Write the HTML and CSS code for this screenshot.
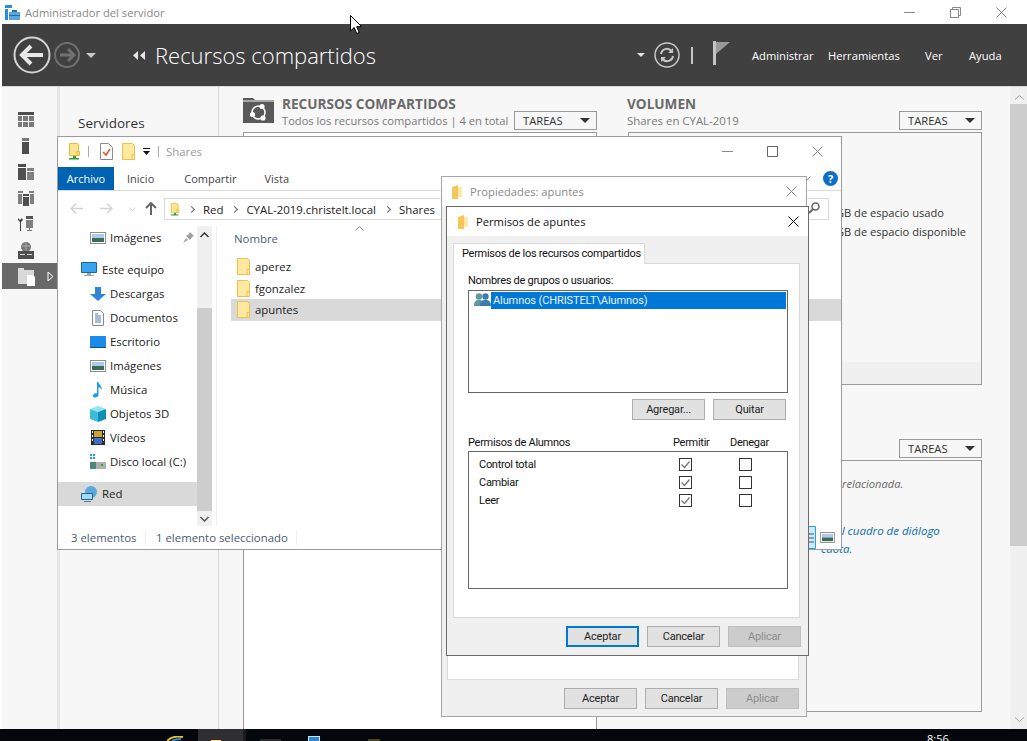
FILE: index.html
```html
<!DOCTYPE html>
<html lang="es">
<head>
    <meta charset="UTF-8">
    <title>Administrador del servidor</title>
    <link rel="stylesheet" href="styles.css">
</head>
<body>
    <svg class="defs" width="0" height="0">
        <symbol id="folder" viewBox="0 0 13 17">
            <path d="M.5.5h10l2 2v14H.5z" fill="#ffe9a0" stroke="#eebf4e"/>
            <path d="M10 11.5h2.5v5H10z" fill="#ffe9a0" stroke="#eebf4e"/>
        </symbol>
        <symbol id="share" viewBox="0 0 13 17">
            <path d="M1.5.5h8l1 1v11h-9z" fill="#ffe58f" stroke="#e8b93c"/>
            <path d="M9 8.5h2.5v4H9z" fill="#ffe58f" stroke="#e8b93c"/>
            <path d="M5 13h3v2H5zM1 15h10v1.500H1z" fill="#2f9e2f"/>
        </symbol>
        <symbol id="smallfolder" viewBox="0 0 10 14">
            <path d="M0 2l6-2v14H0z" fill="#f3c75c"/>
            <path d="M6 2h4v10H6z" fill="#ffe9a6"/>
        </symbol>
        <symbol id="pictures" viewBox="0 0 16 12">
            <rect x=".5" y=".5" width="15" height="11" fill="#fff" stroke="#8d8d8d"/>
            <rect x="2" y="2" width="12" height="4" fill="#a9cde8"/>
            <rect x="2" y="6" width="12" height="4" fill="#3f6a58"/>
        </symbol>
        <symbol id="x" viewBox="0 0 11 11">
            <path d="M.5.5l10 10M10.500.5l-10 10" fill="none" stroke="currentColor"/>
        </symbol>
        <symbol id="tri" viewBox="0 0 10 5">
            <path d="M0 0h10L5 5z" fill="currentColor"/>
        </symbol>
        <symbol id="tick" viewBox="0 0 11 11">
            <path d="M1.500 5.500l3 3 5-6" fill="none" stroke="#777" stroke-width="1.300"/>
        </symbol>
    </svg>

    <div class="manager">
        <div class="sm-title">
            <svg class="sm-logo" width="15" height="15" viewBox="0 0 15 15">
                <path d="M0 0h7v3H0zM0 4h3v11H0z" fill="#2a8fd8"/>
                <path d="M4 7h11v8H4z" fill="#5aa6dc"/>
                <path d="M7 5h5v2H7zM4 10h11v1H4z" fill="#1f6ea8"/>
            </svg>
            <span>Administrador del servidor</span>
            <div class="win-btns">
                <svg width="11" height="11" viewBox="0 0 11 11"><path d="M0 5.500h11" stroke="#888"/></svg>
                <svg width="11" height="11" viewBox="0 0 11 11"><path d="M.5 2.500h8v8h-8zM2.500 2.500v-2h8v8h-2" fill="none" stroke="#888"/></svg>
                <svg class="x-grey" width="11" height="11"><use href="#x"/></svg>
            </div>
        </div>

        <header class="sm-head">
            <svg class="back" width="38" height="38" viewBox="0 0 38 38">
                <circle cx="19" cy="19" r="17.500" fill="none" stroke="#d4d4d4" stroke-width="2"/>
                <path d="M9 19h21M18 10l-9 9 9 9" fill="none" stroke="#e8e8e8" stroke-width="4"/>
            </svg>
            <svg class="forward" width="26" height="26" viewBox="0 0 26 26">
                <circle cx="13" cy="13" r="12" fill="none" stroke="#707070" stroke-width="2"/>
                <path d="M20 13H6M14 7l6 6-6 6" fill="none" stroke="#707070" stroke-width="3"/>
            </svg>
            <svg class="head-drop" width="10" height="5"><use href="#tri"/></svg>
            <svg class="crumb" width="13" height="9" viewBox="0 0 13 9">
                <path d="M5 0v9L0 4.500zM12 0v9L7 4.500z" fill="#e8e8e8"/>
            </svg>
            <h1 class="head-title">Recursos compartidos</h1>
            <svg class="head-drop2" width="8" height="4"><use href="#tri"/></svg>
            <svg class="refresh" width="26" height="26" viewBox="0 0 26 26">
                <circle cx="13" cy="13" r="12" fill="none" stroke="#c8c8c8" stroke-width="1.500"/>
                <path d="M7 12a6 6 0 0 1 10.500-3M19 14a6 6 0 0 1-10.500 3" fill="none" stroke="#c8c8c8" stroke-width="2"/>
                <path d="M19 6v5h-5zM7 20v-5h5z" fill="#c8c8c8"/>
            </svg>
            <span class="head-sep"></span>
            <svg class="flag" width="18" height="24" viewBox="0 0 18 24">
                <path d="M0 0h3v24H0z" fill="#c4c4c4"/><path d="M3 1h14l-14 12z" fill="#9a9a9a"/>
            </svg>
            <nav class="head-menu">
                <a class="m-admin">Administrar</a>
                <a class="m-tools">Herramientas</a>
                <a class="m-view">Ver</a>
                <a class="m-help">Ayuda</a>
            </nav>
        </header>

        <div class="sm-body">
            <aside class="rail">
                <svg width="16" height="16" viewBox="0 0 16 16"><path d="M0 0h16v3H0z" fill="#4f4f4f"/><path d="M0 4h4v5H0zM5 4h5v5H5zM11 4h5v5h-5zM0 10h4v5H0zM5 10h5v5H5zM11 10h5v5h-5z" fill="#7a7a7a"/></svg>
                <svg width="16" height="16" viewBox="0 0 16 16"><path d="M4 0h7v3H4z" fill="#777"/><path d="M4 4h7v12H4z" fill="#4f4f4f"/></svg>
                <svg width="16" height="16" viewBox="0 0 16 16"><path d="M0 0h8v3H0zM0 4h8v12H0z" fill="#4f4f4f"/><path d="M9 4h7v3H9zM9 8h7v8H9z" fill="#808080"/></svg>
                <svg width="16" height="16" viewBox="0 0 16 16"><path d="M0 1h5v2H0zM0 4h4v10H0zM11 1h5v2h-5zM12 4h4v10h-4z" fill="#808080"/><path d="M5 4h6v2H5zM5 7h6v9H5z" fill="#4f4f4f"/></svg>
                <svg width="16" height="16" viewBox="0 0 16 16"><path d="M0 2l2 2 2-2 1 2-2 2v9H2V6L0 4z" fill="#444"/><path d="M8 0h7v3H8z" fill="#555"/><path d="M8 4h7v8H8zM11 12h1v2h2v1H9v-1h2z" fill="#808080"/></svg>
                <svg width="16" height="17" viewBox="0 0 16 17"><circle cx="8" cy="5" r="5" fill="#777"/><path d="M4 4h8M8 0v10" stroke="#aaa"/><path d="M0 9h16v8H0z" fill="#4f4f4f"/><path d="M2 12h5v1H2zM9 12h5v1H9z" fill="#ddd"/></svg>
                <div class="rail-sel">
                    <svg width="17" height="20" viewBox="0 0 17 20"><path d="M0 2h6v2H0zM0 4h16v14H0z" fill="#d8d8d8"/><path d="M9 9h6l2 2v9H9z" fill="#fff"/></svg>
                    <svg class="rail-arrow" width="7" height="11" viewBox="0 0 7 11"><path d="M1 1v9l5-4.500z" fill="none" stroke="#fff"/></svg>
                </div>
            </aside>
            <div class="rail-edge"></div>
            <aside class="side-panel">Servidores</aside>
            <main class="content">
                <section class="col col-shares">
                    <div class="sec-head">
                        <svg class="sec-icon" width="31" height="25" viewBox="0 0 31 25">
                            <path d="M0 0h10l2 2h19v23H0z" fill="#595959"/>
                            <path d="M0 3h31" stroke="#f7f7f7"/>
                            <circle cx="15.500" cy="14.500" r="6.500" fill="none" stroke="#fff" stroke-width="1.500"/>
                            <circle cx="19" cy="8.500" r="2.600" fill="#fff"/><circle cx="9.500" cy="16.500" r="2.600" fill="#fff"/><circle cx="20" cy="20" r="2.600" fill="#fff"/>
                        </svg>
                        <div class="sec-text">
                            <h2>RECURSOS COMPARTIDOS</h2>
                            <p>Todos los recursos compartidos | 4 en total</p>
                        </div>
                        <button class="tasks">TAREAS<svg width="10" height="5"><use href="#tri"/></svg></button>
                    </div>
                    <div class="share-box"></div>
                </section>
                <section class="col col-volume">
                    <div class="sec-head">
                        <div class="sec-text">
                            <h2>VOLUMEN</h2>
                            <p>Shares en CYAL-2019</p>
                        </div>
                        <button class="tasks">TAREAS<svg width="10" height="5"><use href="#tri"/></svg></button>
                    </div>
                    <div class="vol-box">
                        <div class="vol-stats">
                            <p>GB de espacio usado</p>
                            <p>GB de espacio disponible</p>
                        </div>
                        <div class="vol-foot"></div>
                    </div>
                    <div class="tasks-row"><button class="tasks">TAREAS<svg width="10" height="5"><use href="#tri"/></svg></button></div>
                    <div class="quota-box">
                        <p class="quota-msg">relacionada.</p>
                        <p class="quota-link">el cuadro de diálogo</p>
                        <p class="quota-link quota-link2">cuota.</p>
                    </div>
                </section>
            </main>
            <div class="v-scroll">
                <svg width="11" height="6" viewBox="0 0 11 6"><path d="M1 5.500l4.500-4 4.500 4" fill="none" stroke="#a6a6a6"/></svg>
                <div class="v-thumb"></div>
                <svg class="v-down" width="11" height="6" viewBox="0 0 11 6"><path d="M1 .5l4.500 4 4.500-4" fill="none" stroke="#a6a6a6"/></svg>
            </div>
        </div>
    </div>

    <div class="taskbar">
        <svg class="tb-ie" width="17" height="5" viewBox="0 0 17 5"><path d="M0 5C4 1 10 0 16 1" fill="none" stroke="#f2c230" stroke-width="2"/><path d="M5 5c3-2 6-2 9-2" stroke="#2f8fd8" stroke-width="2" fill="none"/></svg>
        <div class="tb-active"><span class="tb-folder"></span></div>
        <span class="tb-gap"></span>
        <span class="tb-grey"></span>
        <span class="tb-blue"></span>
        <span class="tb-olive"></span>
        <span class="tb-clock">8:56</span>
    </div>

    <!-- explorador -->
    <div class="win explorer">
        <div class="ex-title">
            <svg class="ex-share" width="13" height="17"><use href="#share"/></svg>
            <span class="ex-sep"></span>
            <svg class="ex-check" width="13" height="17" viewBox="0 0 13 17">
                <path d="M.5.5h8l4 4v12H.5z" fill="#fff" stroke="#8a8a8a"/>
                <path d="M3 9l3 3 4-6" fill="none" stroke="#e0502a" stroke-width="1.500"/>
            </svg>
            <svg class="ex-folder" width="13" height="17"><use href="#folder"/></svg>
            <svg class="ex-qa" width="7" height="7" viewBox="0 0 7 7"><path d="M0 0h7v1H0zM0 3h7L3.500 7z" fill="#111"/></svg>
            <span class="ex-sep ex-sep2"></span>
            <span class="ex-name">Shares</span>
            <div class="win-btns ex-btns">
                <svg width="11" height="11" viewBox="0 0 11 11"><path d="M0 5.500h11" stroke="#888"/></svg>
                <svg width="11" height="11" viewBox="0 0 11 11"><path d="M.5.5h10v10H.5z" fill="none" stroke="#666"/></svg>
                <svg class="x-grey" width="11" height="11"><use href="#x"/></svg>
            </div>
        </div>
        <div class="ex-tabs">
            <a class="tab-file">Archivo</a>
            <a class="tab-home">Inicio</a>
            <a class="tab-share">Compartir</a>
            <a class="tab-view">Vista</a>
            <svg class="ribbon-chev" width="9" height="5" viewBox="0 0 9 5"><path d="M.5.5l4 4 4-4" fill="none" stroke="#888"/></svg>
            <span class="help">?</span>
        </div>
        <div class="ex-addr">
            <svg class="nav-arrow" width="13" height="11" viewBox="0 0 13 11"><path d="M13 5.500H1M6 .5l-5 5 5 5" fill="none" stroke="#d4d4d4" stroke-width="1.500"/></svg>
            <svg class="nav-arrow" width="13" height="11" viewBox="0 0 13 11"><path d="M0 5.500h12M7 .5l5 5-5 5" fill="none" stroke="#d4d4d4" stroke-width="1.500"/></svg>
            <svg class="nav-hist" width="7" height="4" viewBox="0 0 7 4"><path d="M.5.5l3 3 3-3" fill="none" stroke="#d4d4d4"/></svg>
            <svg class="nav-up" width="12" height="13" viewBox="0 0 12 13"><path d="M6 13V1M1 6l5-5 5 5" fill="none" stroke="#666" stroke-width="2"/></svg>
            <div class="addr-box">
                <svg width="10" height="13" viewBox="0 0 13 17"><use href="#share"/></svg>
                <i class="chev"></i><span>Red</span>
                <i class="chev"></i><span>CYAL-2019.christelt.local</span>
                <i class="chev"></i><span>Shares</span>
            </div>
            <div class="search-box">
                <svg width="12" height="12" viewBox="0 0 12 12"><circle cx="7.500" cy="4.500" r="3.500" fill="none" stroke="#666" stroke-width="1.500"/><path d="M5 7l-4 4" stroke="#666" stroke-width="2"/></svg>
            </div>
        </div>
        <div class="ex-main">
            <div class="nav-pane">
                <div class="nav-list">
                    <div class="nav-row lv2">
                        <svg width="16" height="12"><use href="#pictures"/></svg>Imágenes
                        <svg class="pin" width="11" height="11" viewBox="0 0 11 11"><path d="M7 0l4 4-2 1-2 3-4-4 3-2zM3 6L0 11l5-3z" fill="#a0a0a0"/></svg>
                    </div>
                    <div class="nav-row lv1 gap">
                        <svg width="16" height="15" viewBox="0 0 16 15"><path d="M.5.5h15v10H.5z" fill="#39a5ef" stroke="#17699f"/><path d="M6 11h4v2H6zM3 13h10v1H3z" fill="#9aa6b0"/></svg>Este equipo
                    </div>
                    <div class="nav-row lv2">
                        <svg width="16" height="14" viewBox="0 0 16 14"><path d="M5 0h6v7h5l-8 7-8-7h5z" fill="#2f86d8"/></svg>Descargas
                    </div>
                    <div class="nav-row lv2">
                        <svg width="16" height="16" viewBox="0 0 16 16"><path d="M2.500.5h8l3 3v12h-11z" fill="#fff" stroke="#8a8a8a"/><path d="M5 6h6M5 8h6M5 10h6M5 12h6M5 4h3" stroke="#4a7fb0"/></svg>Documentos
                    </div>
                    <div class="nav-row lv2">
                        <svg width="16" height="12" viewBox="0 0 16 12"><path d="M0 0h16v11H0z" fill="#1b8bea"/><path d="M0 11h16v1H0z" fill="#0e4f85"/></svg>Escritorio
                    </div>
                    <div class="nav-row lv2">
                        <svg width="16" height="12"><use href="#pictures"/></svg>Imágenes
                    </div>
                    <div class="nav-row lv2">
                        <svg width="16" height="16" viewBox="0 0 16 16"><path d="M7 0h1.500c.5 3 4 4 3 8-1-2-2-3-3-3v8c0 2-5 4-5.500 1 0-2 2-3 4-2.500z" fill="#1e9be8"/></svg>Música
                    </div>
                    <div class="nav-row lv2">
                        <svg width="16" height="16" viewBox="0 0 16 16"><path d="M8 0l8 3-8 3-8-3z" fill="#8fe4ee"/><path d="M0 3l8 3v10l-8-3z" fill="#3bbdd6"/><path d="M16 3L8 6v10l8-3z" fill="#0e8fb8"/></svg>Objetos 3D
                    </div>
                    <div class="nav-row lv2">
                        <svg width="16" height="15" viewBox="0 0 16 15"><path d="M1 0h14v15H1z" fill="#2b2b2b"/><path d="M4 1h8v6H4z" fill="#c9a43a"/><path d="M4 8h8v6H4z" fill="#3f6fc4"/><path d="M2 1h1v2H2zM2 5h1v2H2zM2 9h1v2H2zM13 1h1v2h-1zM13 5h1v2h-1zM13 9h1v2h-1z" fill="#fff"/></svg>Vídeos
                    </div>
                    <div class="nav-row lv2">
                        <svg width="16" height="15" viewBox="0 0 16 15"><path d="M0 0h2v2H0zM3 0h2v2H3zM0 3h2v2H0zM3 3h2v2H3z" fill="#19a0e8"/><path d="M0 8h16v7H0z" fill="#b0b0b0"/><path d="M0 8h6v7H0z" fill="#4a8a7a"/><path d="M11 10h2v2h-2z" fill="#1fb01f"/></svg>Disco local (C:)
                    </div>
                    <div class="nav-row lv1 gap selected">
                        <svg width="16" height="16" viewBox="0 0 16 16"><circle cx="10" cy="6" r="6" fill="#5fa8dc"/><path d="M.5 7.500h11v6H.5z" fill="#a8d8f4" stroke="#17699f"/><path d="M3 15h7v1H3z" fill="#5a7a90"/></svg>Red
                    </div>
                </div>
                <div class="nav-scroll">
                    <svg class="ns-btn" width="9" height="6" viewBox="0 0 9 6"><path d="M.5 5l4-4 4 4" fill="none" stroke="#333" stroke-width="1.500"/></svg>
                    <div class="ns-thumb"></div>
                    <svg class="ns-btn ns-down" width="9" height="6" viewBox="0 0 9 6"><path d="M.5 1l4 4 4-4" fill="none" stroke="#555" stroke-width="1.500"/></svg>
                </div>
            </div>
            <div class="files">
                <div class="files-head">Nombre
                    <svg class="sort" width="9" height="5" viewBox="0 0 9 5"><path d="M.5 4.500l4-4 4 4" fill="none" stroke="#888"/></svg>
                </div>
                <div class="file"><svg width="13" height="17"><use href="#folder"/></svg>aperez</div>
                <div class="file"><svg width="13" height="17"><use href="#folder"/></svg>fgonzalez</div>
                <div class="file selected"><svg width="13" height="17"><use href="#folder"/></svg>apuntes</div>
            </div>
        </div>
        <div class="ex-status">
            <span class="st-count">3 elementos</span>
            <span class="st-sel">1 elemento seleccionado</span>
            <span class="st-views">
                <svg width="14" height="23" viewBox="0 0 14 23"><path d="M.5.5h12v22H.5z" fill="#cde8f7" stroke="#26a0da"/><path d="M3 8h8M3 12h8M3 16h8" stroke="#555"/></svg>
                <svg width="15" height="11"><use href="#pictures"/></svg>
            </span>
        </div>
    </div>

    <!-- propiedades -->
    <div class="win props">
        <div class="dlg-title props-title">
            <svg width="10" height="14"><use href="#smallfolder"/></svg>
            <span>Propiedades: apuntes</span>
            <svg class="dlg-x x-grey" width="11" height="11"><use href="#x"/></svg>
        </div>
        <div class="props-body">
            <div class="props-panel"></div>
            <div class="btn-row">
                <button class="btn">Aceptar</button>
                <button class="btn">Cancelar</button>
                <button class="btn off">Aplicar</button>
            </div>
        </div>
    </div>

    <!-- permisos -->
    <div class="win perms">
        <div class="dlg-title">
            <svg width="10" height="14"><use href="#smallfolder"/></svg>
            <span>Permisos de apuntes</span>
            <svg class="dlg-x" width="11" height="11"><use href="#x"/></svg>
        </div>
        <div class="perms-body">
            <div class="tab">Permisos de los recursos compartidos</div>
            <div class="perms-panel">
                <label class="lbl">Nombres de grupos o usuarios:</label>
                <div class="user-list">
                    <svg width="17" height="13" viewBox="0 0 17 13">
                        <circle cx="5" cy="3.500" r="3.200" fill="#5f9a9a"/><path d="M0 13c0-5 2-6 5-6s5 1 5 6z" fill="#5f9a9a"/>
                        <circle cx="11.500" cy="3.500" r="3.200" fill="#3d7ab0"/><path d="M6 13c0-5 2.500-6 5.500-6s5.500 1 5.500 6z" fill="#3d7ab0"/>
                    </svg>
                    <span class="user-sel">Alumnos (CHRISTELT\Alumnos)</span>
                </div>
                <div class="list-btns">
                    <button class="btn">Agregar...</button>
                    <button class="btn">Quitar</button>
                </div>
                <div class="perm-head">
                    <span class="ph-name">Permisos de Alumnos</span>
                    <span class="ph-allow">Permitir</span>
                    <span class="ph-deny">Denegar</span>
                </div>
                <div class="perm-box">
                    <div class="perm-row"><span>Control total</span><i class="cb"><svg width="11" height="11"><use href="#tick"/></svg></i><i class="cb"></i></div>
                    <div class="perm-row"><span>Cambiar</span><i class="cb"><svg width="11" height="11"><use href="#tick"/></svg></i><i class="cb"></i></div>
                    <div class="perm-row"><span>Leer</span><i class="cb"><svg width="11" height="11"><use href="#tick"/></svg></i><i class="cb"></i></div>
                </div>
            </div>
            <div class="btn-row">
                <button class="btn default">Aceptar</button>
                <button class="btn">Cancelar</button>
                <button class="btn off">Aplicar</button>
            </div>
        </div>
    </div>

    <svg class="cursor" width="13" height="19" viewBox="0 0 13 19">
        <path d="M.5.5v15.500l3.700-3.500 2.500 6 2.500-1-2.500-5.800h5z" fill="#fff" stroke="#000"/>
    </svg>
</body>
</html>
```

FILE: styles.css
```css
* {
    box-sizing: border-box;
}
body {
    margin: 0;
    width: 1027px;
    height: 741px;
    overflow: hidden;
    position: relative;
    background: #fff;
    font-family: "Open Sans", "Noto Sans", sans-serif;
    font-size: 11.4px;
    color: #1e1e1e;
}
svg {
    display: block;
    flex: none;
}
.defs {
    position: absolute;
}
p, h1, h2 {
    margin: 0;
    font-weight: normal;
}
button {
    font-family: inherit;
}

/* administrador del servidor */
.manager {
    height: 729px;
    display: flex;
    flex-direction: column;
}
.sm-title {
    height: 24px;
    display: flex;
    align-items: center;
    padding-left: 5px;
    background: #fff;
    color: #8a8a8a;
    font-size: 11.2px;
}
.sm-logo {
    margin-right: 5px;
}
.win-btns {
    margin-left: auto;
    display: flex;
    gap: 35px;
    padding-right: 20px;
}
.x-grey {
    color: #888;
}
.sm-head {
    margin-left: 2px;
    background: #404040;
    display: flex;
    align-items: center;
    color: #fff;
    border-bottom: 1px solid #d8d8d8;
    height: 63px;
}
.back {
    margin-left: 11px;
}
.forward {
    margin-left: 3px;
}
.head-drop {
    margin-left: 6px;
    color: #c8c8c8;
}
.crumb {
    margin-left: 37px;
}
.head-title {
    margin-left: 9px;
    font-size: 22px;
    font-weight: 300;
    width: 482px;
    white-space: nowrap;
}
.head-drop2 {
    color: #e0e0e0;
    margin-left: 0;
}
.refresh {
    margin-left: 9px;
}
.head-sep {
    width: 2px;
    height: 17px;
    background: #c8c8c8;
    margin-left: 11px;
}
.flag {
    margin-left: 20px;
    margin-top: -5px;
}
.head-menu {
    position: relative;
    flex: 1;
    display: flex;
    font-size: 11.2px;
}
.head-menu a {
    white-space: nowrap;
}
.m-admin {
    margin-left: 21px;
    width: 76px;
}
.m-tools {
    width: 97px;
}
.m-view {
    width: 44px;
}
.sm-body {
    flex: 1;
    min-height: 0;
    display: flex;
    margin-left: 2px;
    background: #f7f7f7;
}
.rail {
    width: 55px;
    padding-top: 25px;
    display: flex;
    flex-direction: column;
    gap: 10px;
}
.rail > svg {
    margin-left: 16px;
}
.rail-sel {
    margin-top: -6px;
    height: 26px;
    background: #696969;
    display: flex;
    align-items: center;
    padding-left: 16px;
}
.rail-arrow {
    margin-left: 12px;
}
.rail-edge {
    width: 3px;
    background: #e6e6e6;
}
.side-panel {
    width: 159px;
    padding: 27px 0 0 18px;
    font-size: 13.5px;
    color: #333;
    border-right: 1px solid #d9d9d9;
}
.content {
    width: 791px;
    padding-left: 24px;
    display: flex;
    gap: 31px;
    overflow: hidden;
}
.col {
    width: 354px;
    flex: none;
    display: flex;
    flex-direction: column;
}
.col-shares {
    height: 100%;
}
.sec-head {
    height: 45px;
    flex: none;
    display: flex;
    align-items: flex-start;
    padding-top: 8px;
    position: relative;
}
.sec-icon {
    margin: 3px 8px 0 0;
}
.sec-text {
    white-space: nowrap;
}
.col-volume .sec-text {
    margin-left: -1px;
}
.sec-text h2 {
    font-size: 13.6px;
    font-weight: 700;
    color: #6a6a6a;
    line-height: 18px;
}
.sec-text p {
    color: #7a7a7a;
    font-size: 11.15px;
    line-height: 16px;
}
.col-volume .sec-text p {
    font-size: 11.4px;
}
.tasks {
    width: 83px;
    height: 19px;
    margin: 15px 0 0 auto;
    padding: 0 6px 0 8px;
    display: flex;
    align-items: center;
    justify-content: space-between;
    background: transparent;
    border: 1px solid #9a9a9a;
    color: #333;
    font-size: 11.2px;
}
.sec-head .tasks {
    margin-top: 16px;
}
.share-box {
    flex: 1;
    background: #fff;
    border: 1px solid #9a9a9a;
    border-width: 1px 1px 0 1px;
}
.vol-box {
    height: 253px;
    border: 1px solid #9a9a9a;
    display: flex;
    flex-direction: column;
    justify-content: space-between;
}
.vol-stats {
    margin: 70px 0 0 207px;
    width: 132px;
    overflow: hidden;
    white-space: nowrap;
    color: #333;
    font-size: 11.1px;
    line-height: 19px;
}
.vol-foot {
    height: 22px;
    background: #f0f0f0;
}
.tasks-row {
    display: flex;
    height: 75px;
    padding-top: 39px;
}
.quota-box {
    height: 252px;
    border: 1px solid #9a9a9a;
    font-style: italic;
    font-size: 11.1px;
    color: #666;
    overflow: hidden;
    padding: 15px 0 0 213px;
    white-space: nowrap;
}
.quota-link {
    margin: 32px 0 0 -6px;
    font-size: 11.5px;
    line-height: 16px;
    color: #0a6ea8;
}
.quota-link2 {
    margin: 2px 0 0 -21px;
}
.v-scroll {
    width: 18px;
    margin-right: -2px;
    background: #f0f0f0;
    display: flex;
    flex-direction: column;
    align-items: center;
    padding-top: 7px;
}
.v-thumb {
    width: 100%;
    height: 442px;
    margin-top: 4px;
    background: #cdcdcd;
}
.v-down {
    margin-top: auto;
    margin-bottom: 6px;
}

/* barra de tareas */
.taskbar {
    height: 12px;
    background: #04080c;
    display: flex;
    overflow: hidden;
    color: #fff;
    position: relative;
}
.tb-ie {
    margin: 7px 0 0 167px;
}
.tb-active {
    width: 45px;
    margin-left: 14px;
    background: #2f2f33;
    padding: 11px 0 0 13px;
}
.tb-folder {
    display: block;
    width: 10px;
    height: 2px;
    background: #f5d77a;
}
.tb-gap {
    width: 3px;
    background: #1c1c1e;
}
.tb-grey {
    width: 21px;
    height: 2px;
    margin: 10px 0 0 14px;
    background: #2a2a2a;
}
.tb-blue {
    width: 12px;
    height: 5px;
    margin: 7px 0 0 27px;
    background: #2b88d8;
    border: 1px solid #cfe5f7;
    border-bottom: 0;
}
.tb-olive {
    width: 12px;
    height: 2px;
    margin: 10px 0 0 48px;
    background: #4a4420;
}
.tb-clock {
    margin: 2px 0 0 547px;
    font-size: 11px;
    line-height: 15px;
}

/* ventanas sobre el escritorio */
.win {
    position: absolute;
    display: flex;
    flex-direction: column;
    background: #fff;
}
.explorer {
    left: 57px;
    top: 136px;
    width: 785px;
    height: 414px;
    border: 1px solid #9b9b9b;
    color: #222;
}
.ex-title {
    height: 30px;
    flex: none;
    display: flex;
    align-items: center;
    padding: 0 0 2px 10px;
}
.ex-sep {
    width: 1px;
    height: 11px;
    background: #aaa;
    margin: 0 11px 0 7px;
}
.ex-folder {
    margin-left: 9px;
}
.ex-qa {
    margin-left: 8px;
}
.ex-sep2 {
    margin: 0 7px 0 8px;
}
.ex-name {
    color: #9a9a9a;
}
.ex-btns {
    gap: 34px;
    padding-right: 18px;
}
.ex-tabs {
    height: 24px;
    flex: none;
    display: flex;
    align-items: center;
    border-bottom: 1px solid #dadada;
    position: relative;
    font-size: 11px;
    color: #444;
}
.tab-file {
    width: 56px;
    height: 23px;
    line-height: 23px;
    text-align: center;
    background: #0063b1;
    color: #fff;
}
.tab-home {
    margin-left: 13px;
}
.tab-share {
    margin-left: 30px;
}
.tab-view {
    margin-left: 28px;
}
.ribbon-chev {
    margin-left: auto;
}
.help {
    width: 15px;
    height: 15px;
    margin: 0 3px 0 12px;
    border-radius: 50%;
    background: #0f6fc6;
    color: #fff;
    font-size: 11px;
    font-weight: 700;
    line-height: 15px;
    text-align: center;
}
.ex-addr {
    height: 35px;
    flex: none;
    display: flex;
    align-items: flex-start;
    padding: 7px 12px 0 12px;
}
.nav-arrow {
    margin: 5px 17px 0 0;
}
.nav-hist {
    margin: 9px 9px 0 -1px;
}
.nav-up {
    margin: 4px 7px 0 0;
}
.addr-box {
    flex: 1;
    height: 22px;
    border: 1px solid #d9d9d9;
    display: flex;
    align-items: center;
    padding-left: 5px;
}
.chev {
    width: 5px;
    height: 5px;
    margin: 0 9px;
    border: solid #666;
    border-width: 1px 1px 0 0;
    transform: rotate(45deg);
}
.search-box {
    width: 22px;
    height: 22px;
    border: 1px solid #d9d9d9;
    border-left: 0;
    padding: 3px 0 0 1px;
}
.ex-main {
    flex: 1;
    min-height: 0;
    display: flex;
}
.nav-pane {
    width: 159px;
    display: flex;
    border-right: 1px solid #eee;
}
.nav-list {
    width: 139px;
}
.nav-row {
    height: 24px;
    display: flex;
    align-items: center;
    gap: 5px;
    position: relative;
    white-space: nowrap;
    padding-bottom: 1px;
}
.nav-row.lv1 {
    padding-left: 23px;
}
.nav-row.lv2 {
    padding-left: 32px;
    gap: 4px;
}
.nav-row.gap {
    margin-top: 8px;
}
.nav-row.selected {
    background: #d9d9d9;
}
.pin {
    margin-left: auto;
    margin-right: 3px;
}
.nav-scroll {
    width: 15px;
    background: #f0f0f0;
    display: flex;
    flex-direction: column;
    align-items: center;
    padding-top: 6px;
}
.ns-thumb {
    width: 100%;
    height: 203px;
    margin-top: 70px;
    background: #cdcdcd;
}
.ns-down {
    margin-top: 5px;
}
.files {
    flex: 1;
    padding-left: 14px;
}
.files-head {
    height: 30px;
    padding: 5px 0 0 3px;
    color: #4c607a;
    position: relative;
}
.sort {
    position: absolute;
    left: 124px;
    top: 0;
}
.file {
    height: 21.5px;
    display: flex;
    align-items: center;
    gap: 5px;
    padding-left: 6px;
}
.file.selected {
    background: #d9d9d9;
}
.ex-status {
    height: 23px;
    flex: none;
    display: flex;
    align-items: center;
    color: #4a5a6e;
    padding-left: 13px;
    position: relative;
    white-space: nowrap;
}
.st-count {
    width: 75px;
    border-right: 1px solid #eee;
    margin-right: 10px;
}
.st-sel {
    width: 141px;
    border-right: 1px solid #eee;
}
.st-views {
    margin-left: auto;
    margin-right: 6px;
    display: flex;
    align-items: center;
    gap: 3px;
}
.props {
    left: 441px;
    top: 176px;
    width: 366px;
    height: 541px;
    border: 1px solid #a6a6a6;
    color: #222;
}
.dlg-title {
    height: 29px;
    flex: none;
    display: flex;
    align-items: center;
    padding-left: 10px;
    gap: 8px;
    font-size: 11.2px;
    letter-spacing: 0;
}
.props-title {
    color: #8a8a8a;
}
.dlg-x {
    margin-left: auto;
    margin-right: 9px;
}
.props-body {
    flex: 1;
    background: #f0f0f0;
    display: flex;
    flex-direction: column;
    padding: 0 7px 0 5px;
}
.props-panel {
    flex: 1;
    background: #fff;
    border: 1px solid #d9d9d9;
}
.btn-row {
    display: flex;
    justify-content: flex-end;
    gap: 8px;
    padding: 8px 0 7px;
}
.btn {
    width: 73px;
    height: 21px;
    padding: 0;
    background: #e1e1e1;
    border: 1px solid #adadad;
    color: #1e1e1e;
    font-family: Roboto, sans-serif;
    font-size: 11px;
    letter-spacing: -.2px;
}
.btn.off {
    background: #ccc;
    border-color: #bfbfbf;
    color: #8c8c8c;
}
.btn.default {
    border: 2px solid #0078d7;
}
.perms {
    left: 446px;
    top: 206px;
    width: 363px;
    height: 450px;
    border: 1px solid #6b6b6b;
    font-family: Roboto, sans-serif;
    font-size: 11px;
    letter-spacing: -.28px;
    color: #111;
}
.perms .dlg-title {
    padding-left: 11px;
    font-family: "Open Sans", sans-serif;
    gap: 8px;
}
.perms .dlg-x {
    color: #000;
    margin-right: 9px;
}
.perms-body {
    flex: 1;
    background: #f0f0f0;
    padding: 7px 11px 0 6px;
    display: flex;
    flex-direction: column;
}
.tab {
    width: 192px;
    height: 21px;
    line-height: 20px;
    padding-left: 8px;
    background: #fff;
    border: 1px solid #d9d9d9;
    border-bottom: 0;
    position: relative;
    z-index: 1;
    margin-bottom: -1px;
    white-space: nowrap;
}
.perms-panel {
    height: 355px;
    flex: none;
    margin-right: -3px;
    background: #fff;
    border: 1px solid #d9d9d9;
    padding: 9px 11px 0 14px;
}
.lbl {
    display: block;
    height: 17px;
    line-height: 15px;
}
.user-list {
    height: 103px;
    border: 1px solid #666;
    display: flex;
    align-items: flex-start;
    padding: 1px 0 0 5px;
}
.user-list svg {
    margin-top: 1px;
}
.user-sel {
    flex: 1;
    height: 17px;
    line-height: 17px;
    margin-right: 1px;
    background: #0078d7;
    color: #e8f2fb;
    padding-left: 2px;
    letter-spacing: -.1px;
}
.list-btns {
    display: flex;
    justify-content: flex-end;
    gap: 8px;
    margin: 6px 2px 0 0;
}
.perm-head {
    display: flex;
    height: 17px;
    margin-top: 14px;
    line-height: 18px;
}
.ph-name {
    width: 205px;
}
.ph-allow {
    width: 57px;
}
.perm-box {
    height: 138px;
    border: 1px solid #666;
    padding: 3px 0 0 10px;
}
.perm-row {
    height: 18px;
    display: flex;
    align-items: center;
}
.perm-row span {
    width: 200px;
    flex: none;
}
.cb {
    width: 13px;
    height: 13px;
    flex: none;
    border: 1px solid #333;
    background: #fff;
    margin-right: 47px;
}
.cb:last-child {
    margin-right: 0;
}
.perms .btn-row {
    padding: 8px 0 0;
    margin-right: -4px;
}
.cursor {
    position: absolute;
    left: 350px;
    top: 15px;
}
```
